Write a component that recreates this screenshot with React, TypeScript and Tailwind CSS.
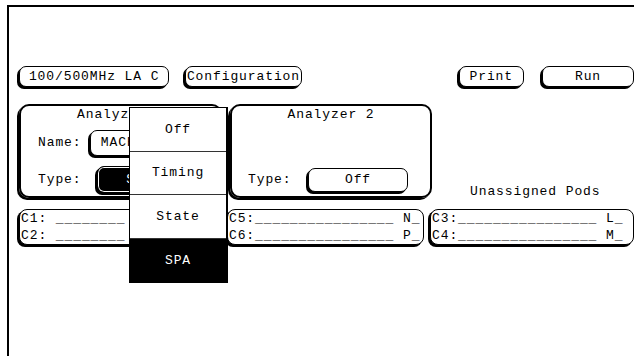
import React from "react";

const btn =
  "flex items-center justify-center rounded-[7px] border border-black bg-white shadow-[-2px_2px_0_#000]";

const PodBox = ({ lines, className }: { lines: string[]; className: string }) => (
  <div
    className={`h-[36px] rounded-[8px] border border-black bg-white pl-[1px] shadow-[-2px_2px_0_#000] overflow-hidden whitespace-pre leading-[17px] ${className}`}
  >
    {lines.map((l) => (
      <div key={l}>{l}</div>
    ))}
  </div>
);

const typeMenu = ["Off", "Timing", "State"];

export default function App() {
  return (
    <div className="relative w-[634px] h-[356px] overflow-hidden bg-white text-black font-['Liberation_Mono',monospace] text-[13px] tracking-[0.9px]">
      <div className="ml-[7px] mt-[5px] h-[351px] border-l-2 border-t-2 border-black pl-[10px]">
        {/* top buttons */}
        <div className="mt-[59px] flex h-[21px] items-stretch">
          <div className={`${btn} w-[154px] pt-[1px]`}>100/500MHz LA C</div>
          <div className={`${btn} ml-[16px] w-[119px] pt-[1px]`}>Configuration</div>
          <div className={`${btn} ml-[157px] w-[67px] pt-[1px]`}>Print</div>
          <div className={`${btn} ml-[18px] w-[92px] shrink-0 pt-[1px]`}>Run</div>
        </div>

        {/* analyzers */}
        <div className="mt-[17px] flex items-start">
          <div className="h-[94px] w-[203px] rounded-[10px] border-2 border-black shadow-[-2px_2px_0_#000] pl-[17px]">
            <div className="h-[18px] leading-[18px] text-center pr-[17px]">Analyzer 1</div>
            <div className="mt-[6px] flex items-center">
              <span className="w-[52px]">Name:</span>
              <div className={`${btn} h-[26px] w-[100px]`}>MACHINE 1</div>
            </div>
            <div className="mt-[10px] flex items-center">
              <span className="w-[59px]">Type:</span>
              <div className="flex h-[27px] w-[102px] items-center justify-center rounded-[7px] border border-black bg-black text-white shadow-[-2px_2px_0_#000,inset_0_0_0_1px_#fff]">
                State
              </div>
            </div>
          </div>

          <div className="ml-[8px] h-[94px] w-[202px] rounded-[10px] border-2 border-black shadow-[-2px_2px_0_#000] pl-[16px]">
            <div className="h-[18px] leading-[18px] text-center pr-[16px]">Analyzer 2</div>
            <div className="mt-[44px] flex items-center">
              <span className="w-[60px]">Type:</span>
              <div className={`${btn} h-[24px] w-[100px]`}>Off</div>
            </div>
          </div>

          <div className="ml-[38px] mt-[80px] h-[16px] leading-[16px] whitespace-nowrap">
            Unassigned Pods
          </div>
        </div>

        {/* pods */}
        <div className="mt-[9px] flex items-start">
          <PodBox className="w-[207px]" lines={["C1: ________", "C2: ________"]} />
          <PodBox
            className="ml-[5px] w-[201px]"
            lines={["C5:________________ N_", "C6:________________ P_"]}
          />
          <PodBox
            className="ml-[6px] w-[204px] shrink-0"
            lines={["C3:________________ L_", "C4:________________ M_"]}
          />
        </div>
      </div>

      {/* type popup menu */}
      <div className="absolute left-[129px] top-[107px] w-[99px] border border-r-2 border-black bg-white">
        {typeMenu.map((t) => (
          <div
            key={t}
            className="flex h-[43.5px] items-center justify-center border-b border-[#333]"
          >
            {t}
          </div>
        ))}
        <div className="flex h-[43.5px] items-center justify-center bg-black text-white">SPA</div>
      </div>
    </div>
  );
}
